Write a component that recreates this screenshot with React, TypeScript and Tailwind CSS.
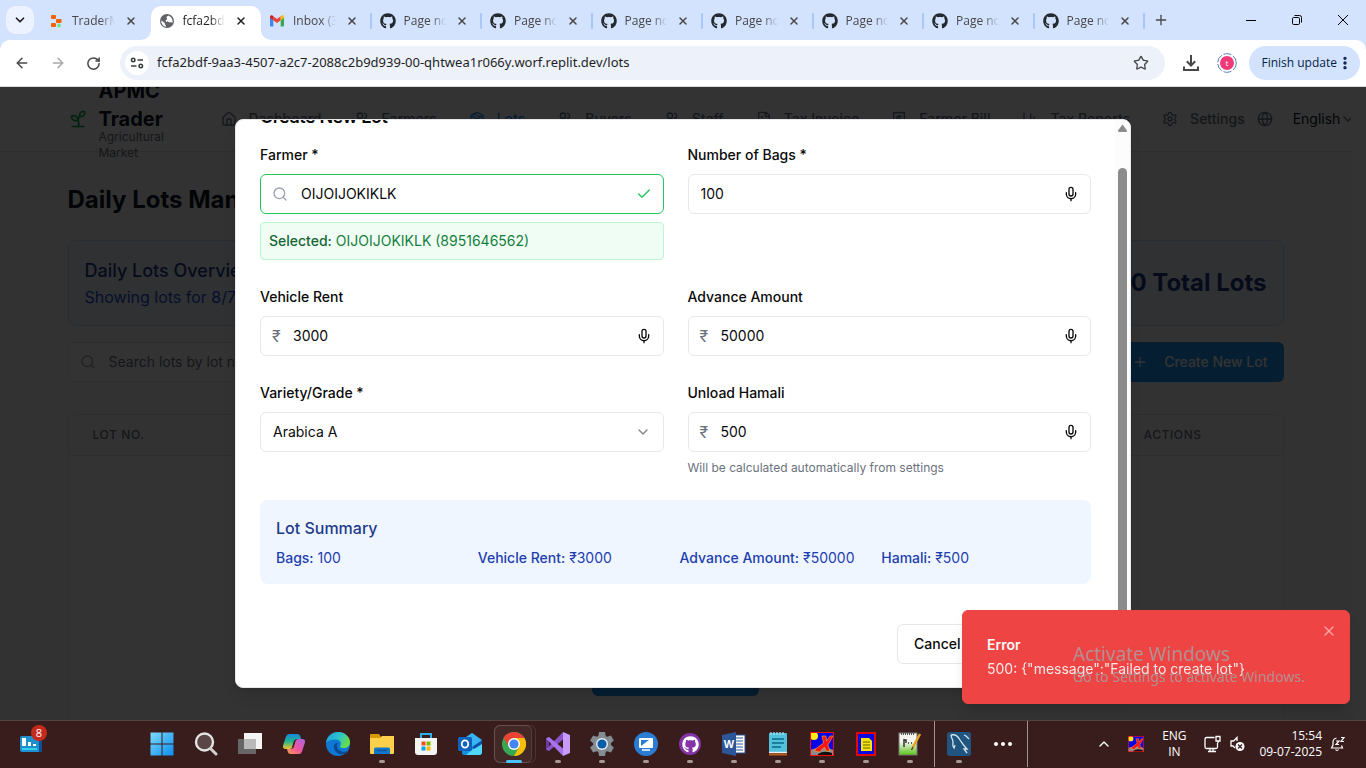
import React from "react";
import {
  ArrowLeft,
  ArrowRight,
  BarChart3,
  Check,
  ChevronDown,
  ChevronUp,
  FileText,
  Globe,
  House,
  Mic,
  MoreVertical,
  Package,
  Plus,
  Receipt,
  RotateCw,
  Search,
  Settings,
  Sprout,
  Star,
  Users,
  X,
} from "lucide-react";
import { FaGithub } from "react-icons/fa";

/* ---------- Browser chrome ---------- */

function ReplitIcon() {
  return (
    <svg width="16" height="16" viewBox="0 0 16 16">
      <rect x="3" y="2" width="5" height="4" rx="1" fill="#f26207" />
      <rect x="8" y="6" width="5.5" height="4" rx="1" fill="#f26207" />
      <rect x="3" y="10" width="5" height="4" rx="1" fill="#f26207" />
      <rect x="9" y="10.5" width="4" height="4" rx="2" fill="#6ee787" />
    </svg>
  );
}

function GlobeIcon() {
  return (
    <svg width="16" height="16" viewBox="0 0 16 16">
      <circle cx="8" cy="8" r="7" fill="#5f6368" />
      <path
        d="M9.5 2.6c-.6.8-1.8.7-2 1.7-.2.9.8 1 .5 1.9-.3.8-1.500.6-1.500 1.600 0 .8 2.500.4 3.300 1.200.8.8 1.400.2 2.300.2l1.600.3c.2-2.900-1.200-5.700-4.200-6.900zM2.300 7.200l3.400 2.700c.4.500-.2 1 .2 1.600.4.6 1 .4 1 1.400v.8C4.300 13.200 2 10.700 2.300 7.200z"
        fill="#fff"
      />
    </svg>
  );
}

function GmailIcon() {
  return (
    <svg width="16" height="16" viewBox="0 0 16 16">
      <path d="M1 4v8.500c0 .6.400 1 1 1h2.300V7.200z" fill="#4285f4" />
      <path d="M15 4v8.500c0 .6-.4 1-1 1h-2.300V7.200z" fill="#34a853" />
      <path d="M4.300 3.200 8 6l3.700-2.800v4L8 10 4.300 7.200z" fill="#ea4335" />
      <path d="M11.700 3.200l.8-.6c1-.7 2.500 0 2.500 1.400v.9l-3.300 2.400z" fill="#fbbc04" />
      <path d="M4.300 3.200l-.8-.6C2.500 1.900 1 2.600 1 4v.9l3.300 2.400z" fill="#c5221f" />
    </svg>
  );
}

function GithubTabIcon() {
  return <FaGithub size={16} color="#24292f" />;
}

type TabData = { title: string; icon: React.ReactNode; active?: boolean; divider?: boolean };

const tabs: TabData[] = [
  { title: "TraderMate", icon: <ReplitIcon /> },
  { title: "fcfa2bdf-9aa3", icon: <GlobeIcon />, active: true },
  { title: "Inbox (324)", icon: <GmailIcon />, divider: true },
  { title: "Page not found", icon: <GithubTabIcon />, divider: true },
  { title: "Page not found", icon: <GithubTabIcon />, divider: true },
  { title: "Page not found", icon: <GithubTabIcon />, divider: true },
  { title: "Page not found", icon: <GithubTabIcon />, divider: true },
  { title: "Page not found", icon: <GithubTabIcon />, divider: true },
  { title: "Page not found", icon: <GithubTabIcon />, divider: true },
  { title: "Page not found", icon: <GithubTabIcon />, divider: true },
];

function Tab({ tab }: { tab: TabData }) {
  return (
    <div
      className={
        tab.active
          ? "relative flex h-full min-w-0 flex-1 items-center rounded-t-[10px] bg-white px-2 pb-1 text-[#1f1f1f]"
          : "relative flex h-full min-w-0 flex-1 items-center px-2 pb-1 text-[#474747]"
      }
    >
      {tab.active && (
        <>
          <svg className="absolute -left-2.5 bottom-0" width="10" height="10" viewBox="0 0 10 10">
            <path d="M10 0v10H0A10 10 0 0 0 10 0z" fill="#fff" />
          </svg>
          <svg className="absolute -right-2.5 bottom-0" width="10" height="10" viewBox="0 0 10 10">
            <path d="M0 0v10h10A10 10 0 0 1 0 0z" fill="#fff" />
          </svg>
        </>
      )}
      <span className="shrink-0">{tab.icon}</span>
      <span className="ml-2 min-w-0 flex-1 overflow-hidden whitespace-nowrap text-[12px] [mask-image:linear-gradient(to_right,black_65%,transparent)]">
        {tab.title}
      </span>
      <button aria-label={`Close ${tab.title}`} className="ml-2 mr-1 flex h-4 w-4 shrink-0 items-center justify-center">
        <X size={12} strokeWidth={3} />
      </button>
      {tab.divider && <span className="absolute right-0 h-4 w-0.5 rounded-full bg-[#a8c7fa]" />}
    </div>
  );
}

function TabStrip() {
  return (
    <div className="flex h-10 shrink-0 items-end bg-[#d3e3fd]">
      <button
        aria-label="Search tabs"
        className="mx-1.5 mb-1.5 flex h-7 w-7 shrink-0 items-center justify-center rounded-[10px] bg-[#ecf2ff] text-[#1f1f1f]"
      >
        <ChevronDown size={14} strokeWidth={3} />
      </button>
      <div className="flex h-[34px] min-w-0 flex-1">
        {tabs.map((tab, i) => (
          <Tab key={i} tab={tab} />
        ))}
      </div>
      <div className="flex h-10 w-[221px] shrink-0 items-center justify-between text-black">
        <button aria-label="New tab" className="ml-2 flex h-4 w-4 items-center justify-center text-[#474747]">
          <Plus size={16} strokeWidth={2} className="shrink-0" />
        </button>
        <div className="flex">
          <button aria-label="Minimize" className="flex h-10 w-[46px] items-center justify-center">
            <svg width="10" height="10" viewBox="0 0 10 10">
              <path d="M0 5.500h10" stroke="currentColor" />
            </svg>
          </button>
          <button aria-label="Restore" className="flex h-10 w-[46px] items-center justify-center">
            <svg width="10" height="10" viewBox="0 0 10 10" fill="none" stroke="currentColor">
              <rect x=".5" y="2.500" width="7" height="7" rx="1.200" />
              <path d="M2.500.5H7.500a2 2 0 0 1 2 2v5" />
            </svg>
          </button>
          <button aria-label="Close window" className="flex h-10 w-[46px] items-center justify-center">
            <svg width="10" height="10" viewBox="0 0 10 10">
              <path d="M0 0l10 10M10 0L0 10" stroke="currentColor" />
            </svg>
          </button>
        </div>
      </div>
    </div>
  );
}

function Toolbar() {
  return (
    <div className="shrink-0 bg-[#d3e3fd]">
      <div className="flex h-[47px] items-center rounded-t-[10px] border-b border-[#dadce0] bg-white text-[#474747]">
        <div className="flex w-[120px] shrink-0 items-center gap-5 pl-3.5">
          <button aria-label="Back">
            <ArrowLeft size={16} strokeWidth={2.2} />
          </button>
          <button aria-label="Forward" className="text-[#a8a8a8]">
            <ArrowRight size={16} strokeWidth={2.2} />
          </button>
          <button aria-label="Reload">
            <RotateCw size={15} strokeWidth={2.4} />
          </button>
        </div>
        <div className="flex h-[34px] min-w-0 flex-1 items-center rounded-full bg-[#ecf1fa] pl-[5px] pr-4">
          <button
            aria-label="Site information"
            className="flex h-6 w-6 shrink-0 items-center justify-center rounded-full bg-white"
          >
            <svg width="14" height="14" viewBox="0 0 14 14" fill="none" stroke="#3c4043" strokeWidth="1.600">
              <circle cx="3.200" cy="4" r="1.700" />
              <path d="M7.500 4H13M1 10h5.500" />
              <circle cx="10.800" cy="10" r="1.700" />
            </svg>
          </button>
          <input
            aria-label="Address"
            defaultValue="fcfa2bdf-9aa3-4507-a2c7-2088c2b9d939-00-qhtwea1r066y.worf.replit.dev/lots"
            className="ml-2 min-w-0 flex-1 bg-transparent font-['Noto_Sans',sans-serif] text-[13px] text-[#1f1f1f] outline-none"
          />
          <button aria-label="Bookmark">
            <Star size={16} strokeWidth={2} />
          </button>
        </div>
        <button aria-label="Downloads" className="ml-[18px]">
          <svg width="16" height="16" viewBox="0 0 16 16" fill="none" stroke="#474747" strokeWidth="2">
            <path d="M8 0v10M3.800 6.300 8 10.500l4.200-4.200M1 11.500V15h14v-3.500" />
          </svg>
        </button>
        <button aria-label="Profile" className="ml-[18px]">
          <svg width="20" height="20" viewBox="0 0 20 20">
            <circle cx="10" cy="10" r="9.300" fill="none" stroke="#5b7fb9" strokeDasharray="8 2" />
            <circle cx="10" cy="10" r="7" fill="#f03a78" />
            <text x="10" y="13" textAnchor="middle" fontSize="8" fill="#fff" fontFamily="Open Sans">
              t
            </text>
          </svg>
        </button>
        <button className="ml-3 mr-1.5 flex h-[34px] items-center rounded-full bg-[#d3e3fd] pl-3 pr-2 text-[12px] text-[#041e49]">
          Finish update
          <MoreVertical size={16} strokeWidth={3} className="-mr-px" />
        </button>
      </div>
    </div>
  );
}

/* ---------- Lots page ---------- */

const navItems = [
  { label: "Dashboard", Icon: House },
  { label: "Farmers", Icon: Users },
  { label: "Lots", Icon: Package, active: true },
  { label: "Buyers", Icon: Users },
  { label: "Staff", Icon: Users },
  { label: "Tax Invoice", Icon: FileText },
  { label: "Farmer Bill", Icon: Receipt },
  { label: "Tax Reports", Icon: BarChart3 },
  { label: "Settings", Icon: Settings },
];

function SiteHeader() {
  return (
    <header className="border-b border-gray-200 bg-white">
      <div className="mx-auto flex h-16 max-w-7xl items-center px-8">
        <div className="flex w-[153px] shrink-0 items-center gap-[11px]">
          <Sprout size={20} className="shrink-0 text-green-600" />
          <div className="w-20">
            <p className="text-xl font-bold text-gray-900">APMC Trader</p>
            <p className="-mt-1 text-xs text-gray-500">Agricultural Market</p>
          </div>
        </div>
        <nav className="flex shrink-0 gap-8">
          {navItems.map(({ label, Icon, active }) => (
            <a
              key={label}
              href="#"
              className={
                active
                  ? "flex items-center gap-3 whitespace-nowrap text-sm font-medium text-[#2096f3]"
                  : "flex items-center gap-3 whitespace-nowrap text-sm font-medium text-gray-500"
              }
            >
              <Icon size={16} />
              {label}
            </a>
          ))}
        </nav>
        <div className="ml-3 flex shrink-0 items-center text-gray-500">
          <Globe size={16} />
          <button className="ml-5 flex items-center text-sm text-gray-900">
            English
            <ChevronDown size={16} className="text-gray-500" />
          </button>
        </div>
      </div>
    </header>
  );
}

function LotsPage() {
  return (
    <div className="flex h-full bg-[#f9fafb]">
      <div className="min-w-0 flex-1">
        <SiteHeader />
        <main className="mx-auto max-w-7xl px-8 py-8">
          <h1 className="text-2xl font-bold text-gray-900">Daily Lots Management</h1>
          <section className="mt-6 flex items-center justify-between rounded-lg border border-blue-200 bg-blue-50 p-4">
            <div>
              <h2 className="text-lg font-medium text-[#1e3a8a]">Daily Lots Overview</h2>
              <p className="text-base text-[#1d4ed8]">Showing lots for 8/7/2025</p>
            </div>
            <p className="text-2xl font-bold text-[#1e3a8a]">0 Total Lots</p>
          </section>
          <div className="mt-4 flex gap-4">
            <label className="flex h-10 min-w-0 flex-1 items-center rounded-md border border-gray-200 bg-white px-[11px]">
              <Search size={16} className="text-gray-400" />
              <input
                placeholder="Search lots by lot number, farmer or variety"
                aria-label="Search lots"
                className="ml-[13px] min-w-0 flex-1 text-sm outline-none placeholder:text-gray-500"
              />
            </label>
            <button className="flex h-10 items-center gap-4 rounded-md bg-[#2096f3] px-4 text-sm font-medium text-white">
              <Plus size={16} />
              Create New Lot
            </button>
          </div>
          <div className="mt-8 overflow-hidden rounded-lg border border-gray-200 bg-white">
            <table className="w-full text-left">
              <thead className="border-b border-gray-200 bg-gray-50">
                <tr className="text-xs uppercase tracking-wider text-gray-500">
                  <th className="px-6 py-3 font-medium">Lot No.</th>
                  <th className="px-6 py-3 font-medium">Farmer</th>
                  <th className="px-6 py-3 font-medium">Variety</th>
                  <th className="px-6 py-3 font-medium">Bags</th>
                  <th className="w-[163px] px-6 py-3 font-medium">Actions</th>
                </tr>
              </thead>
              <tbody>
                <tr>
                  <td colSpan={5} className="pb-24 pt-[200px] text-center">
                    <button className="h-10 rounded-md bg-[#2096f3] px-[15px] text-sm font-medium text-white">
                      Create Your First Lot
                    </button>
                  </td>
                </tr>
              </tbody>
            </table>
          </div>
        </main>
      </div>
      <div className="w-[15px] shrink-0 bg-[#fcfcfc]" />
    </div>
  );
}

/* ---------- Dialog ---------- */

function Field({
  id,
  label,
  value,
  rupee,
  hint,
}: {
  id: string;
  label: string;
  value: string;
  rupee?: boolean;
  hint?: string;
}) {
  return (
    <div>
      <label htmlFor={id} className="block text-sm/[26px] font-medium">
        {label}
      </label>
      <div className="mt-1.5 flex h-10 items-center rounded-md border border-gray-200 px-[11px]">
        {rupee && <span className="w-5 text-base text-[#6b7280]">₹</span>}
        <input id={id} defaultValue={value} className="min-w-0 flex-1 pl-px text-sm outline-none" />
        <button type="button" aria-label={`Dictate ${label}`}>
          <Mic size={16} />
        </button>
      </div>
      {hint && <p className="mt-2 text-xs text-[#6b7280]">{hint}</p>}
    </div>
  );
}

function CreateLotDialog() {
  return (
    <div
      role="dialog"
      aria-label="Create New Lot"
      className="flex max-h-[90%] w-full max-w-4xl overflow-hidden rounded-lg border border-gray-200 bg-white text-[#0a0a0a] shadow-lg"
    >
      <form className="flex min-h-0 min-w-0 flex-1 flex-col justify-end px-6 pb-[23px] pt-6">
        <h2 className="text-lg/[18px] font-semibold tracking-tight">Create New Lot</h2>
        <div className="mt-4 grid grid-cols-2 gap-6">
          <div>
            <label htmlFor="farmer" className="block text-sm/[26px] font-medium">
              Farmer *
            </label>
            <div className="mt-1.5 flex h-10 items-center rounded-md border border-[#22c55e] px-[11px]">
              <Search size={16} className="text-gray-400" />
              <input
                id="farmer"
                defaultValue="OIJOIJOKIKLK"
                className="ml-3 min-w-0 flex-1 pl-px text-sm outline-none"
              />
              <Check size={16} className="text-[#22c55e]" />
            </div>
            <p className="mt-2 rounded border border-[#bbf7d0] bg-[#f0fdf4] p-2 text-sm text-[#15803d]">
              <span className="font-medium text-[#166534]">Selected:</span> OIJOIJOKIKLK (8951646562)
            </p>
          </div>
          <Field id="bags" label="Number of Bags *" value="100" />
          <Field id="rent" label="Vehicle Rent" value="3000" rupee />
          <Field id="advance" label="Advance Amount" value="50000" rupee />
          <div>
            <label htmlFor="variety" className="block text-sm/[26px] font-medium">
              Variety/Grade *
            </label>
            <div className="mt-1.5 flex h-10 items-center rounded-md border border-gray-200 px-3">
              <select id="variety" className="-mr-4 min-w-0 flex-1 appearance-none bg-transparent text-sm outline-none">
                <option>Arabica A</option>
              </select>
              <ChevronDown size={16} className="pointer-events-none opacity-50" />
            </div>
          </div>
          <Field
            id="hamali"
            label="Unload Hamali"
            value="500"
            rupee
            hint="Will be calculated automatically from settings"
          />
        </div>
        <section className="mt-6 rounded-lg bg-[#eff6ff] p-4">
          <h3 className="text-base font-medium text-[#1e3a8a]">Lot Summary</h3>
          <div className="mt-2 grid grid-cols-4 gap-2 text-sm text-[#1e40af]">
            <p>
              <span className="font-medium">Bags:</span> 100
            </p>
            <p>
              <span className="font-medium">Vehicle Rent:</span> ₹3000
            </p>
            <p>
              <span className="font-medium">Advance Amount:</span> ₹50000
            </p>
            <p>
              <span className="font-medium">Hamali:</span> ₹500
            </p>
          </div>
        </section>
        <div className="mt-10 flex justify-end gap-3 text-sm font-medium">
          <button type="button" className="h-10 rounded-md border border-gray-200 px-4">
            Cancel
          </button>
          <button type="submit" className="h-10 rounded-md bg-[#2096f3] px-4 text-white">
            Create Lot
          </button>
        </div>
      </form>
      <div className="flex w-[15px] shrink-0 flex-col items-center bg-[#fcfcfc] pb-4 pt-1">
        <svg width="9" height="8" viewBox="0 0 9 8">
          <path d="M4.500.5 9 6.500Q9 8 8 8H1Q0 8 0 6.500z" fill="#8b8b8b" />
        </svg>
        <div className="mt-9 w-[9px] flex-1 rounded-full bg-[#8b8b8b]" />
      </div>
    </div>
  );
}

function ErrorToast() {
  return (
    <div
      role="alert"
      className="absolute bottom-4 right-4 w-[388px] rounded-md border border-[#ef4444] bg-[#ef4444] p-6 text-[#fafafa] shadow-lg"
    >
      <p className="text-sm font-semibold">Error</p>
      <p className="mt-1 text-sm opacity-90">{'500: {"message":"Failed to create lot"}'}</p>
      <button aria-label="Dismiss" className="absolute right-3 top-3 text-red-300">
        <X size={16} />
      </button>
    </div>
  );
}

function ActivationNotice() {
  return (
    <div className="pointer-events-none absolute bottom-[33px] right-10 w-[253px] font-['Noto_Sans',sans-serif] text-[#a3a3a3]/80">
      <p className="text-[19px]/[26px]">Activate Windows</p>
      <p className="text-[14px]/5">Go to Settings to activate Windows.</p>
    </div>
  );
}

/* ---------- Taskbar ---------- */

const WidgetIcon = () => (
  <svg width="28" height="28" viewBox="0 0 28 28">
    <rect x="2" y="11" width="22" height="16" rx="2" fill="#1d8fcf" />
    <path d="M21 11h1a2 2 0 0 1 2 2v12a2 2 0 0 1-2 2h-1z" fill="#0b4f94" />
    <path d="M4 13h4v8H4zM10 17h3v4h-3zM15 19h3v2h-3z" fill="#fff" />
    <path d="M4 24h15" stroke="#35d0ec" strokeWidth="2" />
  </svg>
);

const StartIcon = () => (
  <svg width="24" height="24" viewBox="0 0 24 24">
    <defs>
      <linearGradient id="start" x1="0" y1="0" x2="1" y2="1">
        <stop offset="0" stopColor="#7fdcfb" />
        <stop offset="1" stopColor="#0a8df2" />
      </linearGradient>
    </defs>
    <path
      d="M0.500 0.500h11v11h-11zM12.500 0.500h11v11h-11zM0.500 12.500h11v11h-11zM12.500 12.500h11v11h-11z"
      fill="url(#start)"
    />
  </svg>
);

const SearchTaskIcon = () => (
  <svg width="24" height="24" viewBox="0 0 24 24" fill="none">
    <circle cx="10.500" cy="10" r="8.500" fill="#5a4644" stroke="#e4e4e4" strokeWidth="2.400" />
    <path d="M16.500 16.500 22 22" stroke="#d0d0d0" strokeWidth="3" strokeLinecap="round" />
  </svg>
);

const TaskViewIcon = () => (
  <svg width="24" height="24" viewBox="0 0 24 24">
    <rect x="6" y="1" width="18" height="16" fill="#f4f4f4" />
    <rect x="0" y="7" width="18" height="15" fill="#666" />
    <rect x="6" y="7" width="12" height="10" fill="#b9b9b9" />
  </svg>
);

const CopilotIcon = () => (
  <svg width="24" height="24" viewBox="0 0 24 24">
    <defs>
      <linearGradient id="copA" x1="0" y1="0" x2="0" y2="1">
        <stop offset="0" stopColor="#1687e0" />
        <stop offset=".5" stopColor="#23b78c" />
        <stop offset="1" stopColor="#f2c230" />
      </linearGradient>
      <linearGradient id="copB" x1="1" y1="0" x2="0" y2="1">
        <stop offset="0" stopColor="#a764e8" />
        <stop offset=".55" stopColor="#f0569b" />
        <stop offset="1" stopColor="#f8a04a" />
      </linearGradient>
    </defs>
    <path
      d="M7 2h8q3 0 3.500 3L19 7h-4q-2 0-2.600 2L10.500 15q-.8 2-2.800 2H4q-4 0-2.800-4L4 4.500Q4.800 2 7 2z"
      fill="url(#copA)"
    />
    <path
      d="M17 22H9q-3 0-3.500-3L5 17h4q2 0 2.600-2L13.500 9q.8-2 2.800-2H20q4 0 2.800 4L20 19.500Q19.200 22 17 22z"
      fill="url(#copB)"
    />
    <path d="M12 8.500h1.500l-2 7H10z" fill="#381d1c" />
  </svg>
);

const EdgeIcon = () => (
  <svg width="24" height="24" viewBox="0 0 24 24">
    <defs>
      <linearGradient id="edgeA" x1="0" y1="0" x2="1" y2=".4">
        <stop offset="0" stopColor="#1b9de2" />
        <stop offset=".6" stopColor="#2fc4c8" />
        <stop offset="1" stopColor="#64dd4d" />
      </linearGradient>
    </defs>
    <circle cx="12" cy="12" r="12" fill="#0f78d4" />
    <path
      d="M0 11C1 4 6 0 12 0c7 0 12 5 12 10 0 4-3 6-6 6-3.500 0-4.500-1.200-3.600-2.600C16 11 14 7.500 9.500 7.500 5 7.500 1 9 0 11z"
      fill="url(#edgeA)"
    />
    <path
      d="M8 13c-1 5 3 9.500 8 9.500 2.500 0 4.500-1.500 6-3.500-5 2-11 0-11-5.500 0-1.500 1-2.500 1-2.500-2 0-3.600.6-4 2z"
      fill="#0b4a94"
    />
  </svg>
);

const FolderIcon = () => (
  <svg width="24" height="24" viewBox="0 0 24 24">
    <path d="M0 3q0-1 1-1h8l2 3v4H0z" fill="#d99a06" />
    <path d="M0 6h10l2-2h12v17q0 1-1 1H1q-1 0-1-1z" fill="#fdd04b" />
    <path d="M4 22v-5q0-1.500 1.500-1.500h13Q20 15.500 20 17v5z" fill="#1378c9" />
    <path d="M7 18.500h10" stroke="#0b58a0" strokeWidth="1.500" />
  </svg>
);

const StoreIcon = () => (
  <svg width="24" height="24" viewBox="0 0 24 24">
    <path d="M7 6V2h10v4" fill="none" stroke="#2bb3ee" strokeWidth="2" />
    <path d="M1 6h22v14q0 3-3 3H4q-3 0-3-3z" fill="#f4f4f4" />
    <path d="M7.500 9.500h4v4h-4z" fill="#f25022" />
    <path d="M12.500 9.500h4v4h-4z" fill="#7fba00" />
    <path d="M7.500 14.500h4v4h-4z" fill="#00a4ef" />
    <path d="M12.500 14.500h4v4h-4z" fill="#ffb900" />
  </svg>
);

const OutlookIcon = () => (
  <svg width="24" height="24" viewBox="0 0 24 24">
    <path d="M4 9 14 1l10 8v11q0 3-3 3H6q-2 0-2-2z" fill="#1490df" />
    <path d="M8 5 14 1l10 7-10 8z" fill="#36b3f0" />
    <path d="M24 9v11q0 3-3 3H8z" fill="#4fd8fb" />
    <path d="M24 8.500 14 15l2 2 8-5z" fill="#0b4fa8" />
    <rect x="0" y="5" width="14" height="14" rx="1.500" fill="#0f62bd" />
    <ellipse cx="7" cy="12" rx="3.200" ry="3.600" fill="none" stroke="#fff" strokeWidth="1.800" />
  </svg>
);

const ChromeIcon = () => (
  <svg width="24" height="24" viewBox="0 0 24 24">
    <circle cx="12" cy="12" r="12" fill="#34a853" />
    <path d="M1.600 6A12 12 0 0 1 22.400 6H12z" fill="#ea4335" />
    <path d="M1.600 6 7 15l5-9z" fill="#ea4335" />
    <path d="M22.400 6A12 12 0 0 1 12 24l5.200-9L12 6z" fill="#fbbc04" />
    <circle cx="12" cy="12" r="6" fill="#fff" />
    <circle cx="12" cy="12" r="4.600" fill="#4285f4" />
  </svg>
);

const VisualStudioIcon = () => (
  <svg width="24" height="24" viewBox="0 0 24 24">
    <path d="M0 6.500 3 5v14l-3-1.500z" fill="#6b3ba8" />
    <path d="M0 17.500 17 0v7.500L3 19z" fill="#8a53c8" />
    <path d="M0 6.500 3 5l14 11.500V24z" fill="#a873ea" />
    <path d="M17 0l7 3v18l-7 3z" fill="#c69bfa" />
  </svg>
);

const GearIcon = () => (
  <svg width="24" height="24" viewBox="0 0 24 24">
    <circle cx="12" cy="12" r="9" fill="#848b91" />
    <g fill="#848b91">
      <path d="M9 0h6l1 6H8zM9 24h6l1-6H8z" />
      <path d="M9 0h6l1 6H8zM9 24h6l1-6H8z" transform="rotate(60 12 12)" />
      <path d="M9 0h6l1 6H8zM9 24h6l1-6H8z" transform="rotate(120 12 12)" />
    </g>
    <circle cx="12" cy="12" r="6" fill="#e8eef4" />
    <circle cx="12" cy="12" r="4.600" fill="#0a5ea8" />
  </svg>
);

const RemoteIcon = () => (
  <svg width="24" height="24" viewBox="0 0 24 24">
    <circle cx="12" cy="12" r="12" fill="#2b7cd3" />
    <rect x="5" y="6" width="14" height="10" rx="1" fill="#fff" />
    <path d="M7 8h8l-8 6z" fill="#2b7cd3" />
    <path d="M8 18h8" stroke="#fff" strokeWidth="1.500" />
  </svg>
);

const GithubDesktopIcon = () => (
  <span className="flex h-[22px] w-[22px] items-center justify-center rounded-full bg-[#8534a8]">
    <FaGithub size={17} color="#fff" />
  </span>
);

const WordIcon = () => (
  <svg width="24" height="24" viewBox="0 0 24 24">
    <rect x="10" y="3" width="13" height="18" fill="#fff" stroke="#2b579a" />
    <path d="M14 6h7M14 9h7M14 12h7M14 15h7M14 18h7" stroke="#2b579a" />
    <path d="M0 3 14 0v24L0 21z" fill="#2b579a" />
    <text x="7" y="16" textAnchor="middle" fontSize="11" fontWeight="700" fill="#fff" fontFamily="Liberation Sans">
      W
    </text>
  </svg>
);

const NotepadIcon = () => (
  <svg width="24" height="24" viewBox="0 0 24 24">
    <rect x="3" y="1" width="18" height="20" rx="1" fill="#51c1dc" />
    <path d="M5 0v3M8 0v3M11 0v3M14 0v3M17 0v3" stroke="#a6e4f1" strokeWidth="1.200" />
    <path d="M6 7h12M6 11h12M6 15h9" stroke="#0b6a86" strokeWidth="1.600" />
    <path d="M3 20.500h18" stroke="#eee" strokeWidth="1.500" />
    <path d="M3 22.500h18" stroke="#b85c1a" strokeWidth="2" />
  </svg>
);

const XLauncherIcon = ({ size = 24 }: { size?: number }) => (
  <svg width={size} height={size} viewBox="0 0 24 24">
    <rect width="24" height="24" fill="#0404e8" />
    <path d="M0 18q12-5 24 0v6H0z" fill="#8b8b8b" />
    <path d="M8 22q6-4 14-1v3H8z" fill="#111" />
    <circle cx="4" cy="4" r="4" fill="#ffee10" />
    <path
      d="M12 4h4l.5 5L20 4h3l-5 9 2 6h-4l-1.500-4-5 5-5-1 1-2 8-6z"
      fill="#fa1414"
      stroke="#ffcf30"
      strokeWidth=".5"
    />
    <rect x=".5" y=".5" width="23" height="23" fill="none" stroke="#f50c0c" />
  </svg>
);

const NoteDbIcon = () => (
  <svg width="24" height="24" viewBox="0 0 24 24">
    <rect x="3" y="1" width="18" height="22" fill="#0a0ae0" stroke="#e00808" strokeWidth="2" />
    <path d="M7 6h8l3 3v10H7z" fill="#f2e40c" />
    <path d="M9 10h7M9 13h7M9 16h7" stroke="#6a6408" />
  </svg>
);

const NotepadPlusIcon = () => (
  <svg width="24" height="24" viewBox="0 0 24 24">
    <defs>
      <linearGradient id="npp" x1="0" y1="0" x2="0" y2="1">
        <stop offset=".4" stopColor="#f4f4ee" />
        <stop offset="1" stopColor="#58c416" />
      </linearGradient>
    </defs>
    <rect x="1" y="1" width="18" height="22" fill="url(#npp)" stroke="#777" />
    <path d="M3 2h14" stroke="#555" strokeDasharray="1 1" strokeWidth="2" />
    <path d="M6 7v8M6 8h2v3M10 11h1M13 11h1" stroke="#333" strokeWidth="1.500" fill="none" />
    <path d="M22 2 15 15" stroke="#e8a023" strokeWidth="2.500" />
    <path d="M15 15 13.500 18" stroke="#6b4512" strokeWidth="1.500" />
  </svg>
);

const WorkbenchIcon = () => (
  <svg width="24" height="24" viewBox="0 0 24 24">
    <rect width="24" height="24" rx="3" fill="#20557f" />
    <path
      d="M4 3c4-1 7 1 9 5 2 3 3 5 7 9l-3 0 3 4M4 3c0 3 2 4 2 7 0 2-1 4 1 6l1-3M17 3l2 1 3 3"
      fill="none"
      stroke="#d5e4ee"
      strokeWidth="1.300"
    />
  </svg>
);

const apps: { name: string; icon: React.ReactNode; running?: boolean; active?: boolean }[] = [
  { name: "Start", icon: <StartIcon /> },
  { name: "Search", icon: <SearchTaskIcon /> },
  { name: "Task view", icon: <TaskViewIcon /> },
  { name: "Copilot", icon: <CopilotIcon /> },
  { name: "Edge", icon: <EdgeIcon /> },
  { name: "File Explorer", icon: <FolderIcon />, running: true },
  { name: "Store", icon: <StoreIcon /> },
  { name: "Outlook", icon: <OutlookIcon /> },
  { name: "Chrome", icon: <ChromeIcon />, active: true },
  { name: "Visual Studio", icon: <VisualStudioIcon />, running: true },
  { name: "Settings", icon: <GearIcon />, running: true },
  { name: "Remote Desktop", icon: <RemoteIcon />, running: true },
  { name: "GitHub Desktop", icon: <GithubDesktopIcon />, running: true },
  { name: "Word", icon: <WordIcon />, running: true },
  { name: "Notepad", icon: <NotepadIcon />, running: true },
  { name: "Launcher", icon: <XLauncherIcon />, running: true },
  { name: "Notes", icon: <NoteDbIcon />, running: true },
  { name: "Notepad++", icon: <NotepadPlusIcon />, running: true },
];

function AppButton({ name, icon, running, active }: (typeof apps)[number]) {
  return (
    <button aria-label={name} className="relative flex h-full w-11 items-center justify-center">
      {active && (
        <>
          <span className="absolute inset-y-1 left-0.5 right-0 rounded-md border border-white/10" />
          <span className="absolute inset-y-1 left-0.5 right-1 rounded-md border border-white/10 bg-white/5" />
          <span className="absolute bottom-1 h-[3px] w-4 rounded-full bg-[#4cc2ff]" />
        </>
      )}
      <span className="relative">{icon}</span>
      {running && <span className="absolute bottom-1 h-[3px] w-1.5 rounded-full bg-[#a59896]" />}
    </button>
  );
}

function Taskbar() {
  return (
    <div className="flex h-12 shrink-0 items-center border-t border-[#544340] bg-[#381d1c] pb-px text-white">
      <button aria-label="Widgets" className="relative ml-[18px] mr-[94px] w-7">
        <div className="pb-2.5">
          <WidgetIcon />
        </div>
        <span className="absolute left-[13px] top-0 flex h-4 w-4 items-center justify-center rounded-full bg-[#c42b1c] text-[11px]">
          8
        </span>
      </button>
      {apps.map((app) => (
        <AppButton key={app.name} {...app} />
      ))}
      <span className="mx-0.5 h-full w-px bg-[#a39390]" />
      <AppButton name="Workbench" icon={<WorkbenchIcon />} running />
      <button aria-label="More apps" className="flex w-11 justify-center gap-[3px]">
        <span className="h-1 w-1 rounded-full bg-white" />
        <span className="h-1 w-1 rounded-full bg-white" />
        <span className="h-1 w-1 rounded-full bg-white" />
      </button>
      <span className="ml-0.5 h-full w-px bg-[#a39390]" />
      <div className="flex flex-1 items-center justify-end pr-5 text-[12px]/4">
        <button aria-label="Hidden icons">
          <ChevronUp size={16} />
        </button>
        <span className="ml-4">
          <XLauncherIcon size={16} />
        </span>
        <p className="ml-4 w-7 text-center">
          ENG
          <br />
          IN
        </p>
        <svg
          className="ml-4"
          width="17"
          height="18"
          viewBox="0 0 17 18"
          fill="none"
          stroke="currentColor"
          strokeWidth="1.300"
        >
          <path d="M10.500 2.500H2.500a1.500 1.500 0 0 0-1.500 1.500v8a1.500 1.500 0 0 0 1.500 1.500h9.500a1.500 1.500 0 0 0 1.500-1.500V8M4 16.500h8M6 13.500v3M9 13.500v3M12 1.500h4v4.500h-4zM14 6v2" />
        </svg>
        <svg
          className="ml-2"
          width="17"
          height="16"
          viewBox="0 0 17 16"
          fill="none"
          stroke="currentColor"
          strokeWidth="1.300"
        >
          <path d="M8 5V1.500L4.500 5H2v5h2l2 2" />
          <circle cx="11" cy="10.500" r="4.500" fill="#fff" stroke="none" />
          <path d="M9 8.500l4 4M13 8.500l-4 4" stroke="#381d1c" />
        </svg>
        <p className="ml-[13px] text-right">
          15:54
          <br />
          09-07-2025
        </p>
        <svg
          className="ml-2"
          width="16"
          height="16"
          viewBox="0 0 16 16"
          fill="none"
          stroke="currentColor"
          strokeWidth="1.200"
        >
          <path d="M6.500 2A4.500 4.500 0 0 0 3 6.500V9l-1.500 3h11L11.500 9.500M5.500 13.500a1.800 1.800 0 0 0 3 0M6 5h3L6 8.500h3M11 1.500h3L11 5.500h3" />
        </svg>
      </div>
    </div>
  );
}

export default function App() {
  return (
    <div className="flex h-screen flex-col overflow-hidden font-['Open_Sans','Noto_Sans',sans-serif]">
      <TabStrip />
      <Toolbar />
      <div className="relative min-h-0 flex-1 overflow-hidden font-[Inter,sans-serif]">
        <LotsPage />
        <div className="absolute inset-0 flex items-center justify-center bg-black/80">
          <CreateLotDialog />
        </div>
        <ErrorToast />
        <ActivationNotice />
      </div>
      <Taskbar />
    </div>
  );
}
